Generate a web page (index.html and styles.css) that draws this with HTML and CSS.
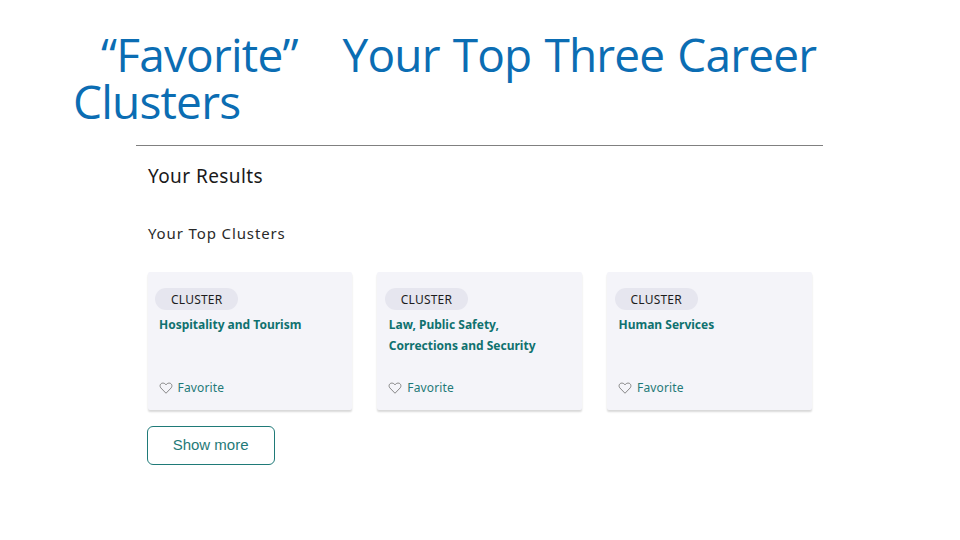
FILE: index.html
```html
<!DOCTYPE html>
<html lang="en">
<head>
<meta charset="utf-8">
<title>Favorite</title>
<link rel="stylesheet" href="styles.css">
</head>
<body>
<h1 class="title"><span class="indent"></span>“Favorite”&nbsp;&nbsp;<span class="gap"></span> Your Top Three Career Clusters</h1>
<main class="panel">
  <h2 class="results">Your Results</h2>
  <h3 class="top">Your Top Clusters</h3>
  <div class="cards">
    <article class="card">
      <span class="pill">CLUSTER</span>
      <div class="name">Hospitality and Tourism</div>
      <div class="fav"><svg class="heart" viewBox="0 0 16 16"><path d="M8 14 L2.2 8 C0.2 5.6 1.5 2.4 4.4 2.4 C6 2.4 7.2 3.2 8 4.4 C8.8 3.2 10 2.4 11.6 2.4 C14.5 2.4 15.8 5.6 13.8 8 Z"/></svg>Favorite</div>
    </article>
    <article class="card">
      <span class="pill">CLUSTER</span>
      <div class="name">Law, Public Safety,<br>Corrections and Security</div>
      <div class="fav"><svg class="heart" viewBox="0 0 16 16"><path d="M8 14 L2.2 8 C0.2 5.6 1.5 2.4 4.4 2.4 C6 2.4 7.2 3.2 8 4.4 C8.8 3.2 10 2.4 11.6 2.4 C14.5 2.4 15.8 5.6 13.8 8 Z"/></svg>Favorite</div>
    </article>
    <article class="card">
      <span class="pill">CLUSTER</span>
      <div class="name">Human Services</div>
      <div class="fav"><svg class="heart" viewBox="0 0 16 16"><path d="M8 14 L2.2 8 C0.2 5.6 1.5 2.4 4.4 2.4 C6 2.4 7.2 3.2 8 4.4 C8.8 3.2 10 2.4 11.6 2.4 C14.5 2.4 15.8 5.6 13.8 8 Z"/></svg>Favorite</div>
    </article>
  </div>
  <button class="more">Show more</button>
</main>
</body>
</html>
```
FILE: styles.css
```css
html, body { margin: 0; padding: 0; background: #fff; }
body { width: 960px; height: 540px; overflow: hidden; font-family: "Open Sans", "Noto Sans", sans-serif; }
.title {
  margin: 0;
  padding: 31px 120px 0 73px;
  font: 400 46px/47px "Open Sans", sans-serif;
  letter-spacing: -0.8px;
  word-spacing: 1.8px;
  color: #0b6db3;
}
.indent { display: inline-block; width: 28px; }
.gap { display: inline-block; width: 6px; }
.panel {
  margin: 20px 137px 0 136px;
  border-top: 1px solid #808080;
  padding: 17px 0 0 11.6px;
}
.results { margin: 0 0 0 0.4px; font: 400 19px/26px "Noto Sans", sans-serif; letter-spacing: 0.42px; color: #1a1a1a; }
.top { margin: 34px 0 0 0.4px; font: 400 15px/20px "Noto Sans", sans-serif; letter-spacing: 0.88px; color: #2a2a2a; }
.cards { display: flex; gap: 25.25px; margin-top: 29px; }
.card {
  width: 204.5px; height: 138px; box-sizing: border-box;
  background: #f4f4f9;
  box-shadow: 0 2px 2px #d9d9d9;
  padding: 16px 0 0 7.6px;
  display: flex; flex-direction: column; align-items: flex-start;
  border-radius: 2px;
}
.pill {
  width: 83px; height: 22px; box-sizing: border-box; padding-top: 1px; border-radius: 11px;
  background: #e6e6ef;
  font: 400 12px/22px "Noto Sans", sans-serif;
  letter-spacing: 0.2px;
  color: #1d1d1d; text-align: center;
}
.name {
  margin: 4px 0 0 3.8px;
  font: 700 12px/21px "Noto Sans", sans-serif;
  color: #0f716f;
}
.fav {
  margin: auto 0 13px 3.4px;
  display: flex; align-items: center; gap: 5px;
  font: 400 12px/18px "Noto Sans", sans-serif;
  letter-spacing: 0.15px;
  color: #1f7a78;
}
.heart { width: 14px; height: 14px; fill: none; stroke: #777; stroke-width: 1; }
.more {
  display: block; margin: 16px 0 0 -1px;
  width: 128px; height: 39px; box-sizing: border-box;
  padding: 0 0 2px;
  background: #fff;
  border: 1px solid #1f7a78; border-radius: 6px;
  font: 400 15px "Liberation Sans", sans-serif;
  color: #1f7a78;
}
```
